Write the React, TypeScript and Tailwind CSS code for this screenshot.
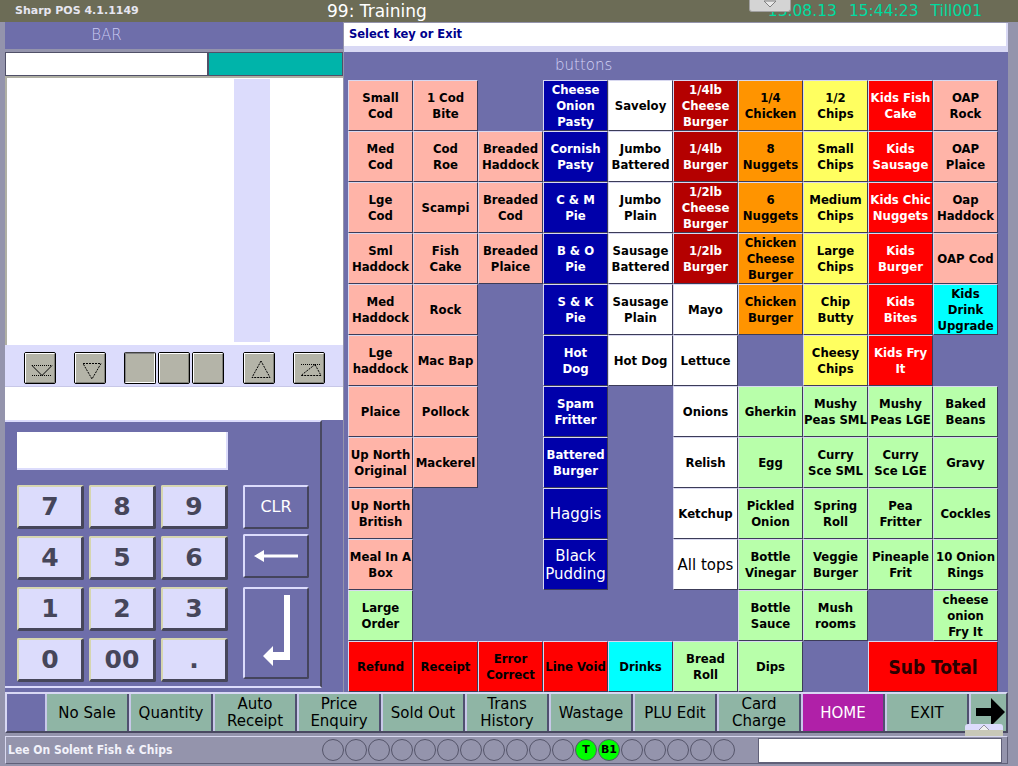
import React from 'react'

type Kind = 'P' | 'B' | 'W' | 'D' | 'O' | 'Y' | 'R' | 'X' | 'C' | 'G' | 'S'
type Cell = [string, Kind, ('big' | 'wide')?] | null

const KIND: Record<Kind, string> = {
  P: 'bg-[#ffb4a8] text-black',
  B: 'bg-[#0000aa] text-white',
  W: 'bg-white text-black',
  D: 'bg-[#b40000] text-white',
  O: 'bg-[#ff9400] text-black',
  Y: 'bg-[#ffff60] text-black',
  R: 'bg-[#ff0000] text-white',
  X: 'bg-[#ff0000] text-black',
  C: 'bg-[#00ffff] text-black',
  G: 'bg-[#b8ffaa] text-black',
  S: 'bg-[#ff0000] text-[#2a0000] col-span-2',
}

const GRID: Cell[][] = [
  [['Small\nCod', 'P'], ['1 Cod\nBite', 'P'], null, ['Cheese\nOnion\nPasty', 'B'], ['Saveloy', 'W'], ['1/4lb\nCheese\nBurger', 'D'], ['1/4\nChicken', 'O'], ['1/2\nChips', 'Y'], ['Kids Fish\nCake', 'R'], ['OAP\nRock', 'P']],
  [['Med\nCod', 'P'], ['Cod\nRoe', 'P'], ['Breaded\nHaddock', 'P'], ['Cornish\nPasty', 'B'], ['Jumbo\nBattered', 'W'], ['1/4lb\nBurger', 'D'], ['8\nNuggets', 'O'], ['Small\nChips', 'Y'], ['Kids\nSausage', 'R'], ['OAP\nPlaice', 'P']],
  [['Lge\nCod', 'P'], ['Scampi', 'P'], ['Breaded\nCod', 'P'], ['C & M\nPie', 'B'], ['Jumbo\nPlain', 'W'], ['1/2lb\nCheese\nBurger', 'D'], ['6\nNuggets', 'O'], ['Medium\nChips', 'Y'], ['Kids Chic\nNuggets', 'R'], ['Oap\nHaddock', 'P']],
  [['Sml\nHaddock', 'P'], ['Fish\nCake', 'P'], ['Breaded\nPlaice', 'P'], ['B & O\nPie', 'B'], ['Sausage\nBattered', 'W'], ['1/2lb\nBurger', 'D'], ['Chicken\nCheese\nBurger', 'O'], ['Large\nChips', 'Y'], ['Kids\nBurger', 'R'], ['OAP Cod', 'P']],
  [['Med\nHaddock', 'P'], ['Rock', 'P'], null, ['S & K\nPie', 'B'], ['Sausage\nPlain', 'W'], ['Mayo', 'W'], ['Chicken\nBurger', 'O'], ['Chip\nButty', 'Y'], ['Kids\nBites', 'R'], ['Kids\nDrink\nUpgrade', 'C']],
  [['Lge\nhaddock', 'P'], ['Mac Bap', 'P'], null, ['Hot\nDog', 'B'], ['Hot Dog', 'W'], ['Lettuce', 'W'], null, ['Cheesy\nChips', 'Y'], ['Kids Fry\nIt', 'R'], null],
  [['Plaice', 'P'], ['Pollock', 'P'], null, ['Spam\nFritter', 'B'], null, ['Onions', 'W'], ['Gherkin', 'G'], ['Mushy\nPeas SML', 'G'], ['Mushy\nPeas LGE', 'G'], ['Baked\nBeans', 'G']],
  [['Up North\nOriginal', 'P'], ['Mackerel', 'P'], null, ['Battered\nBurger', 'B'], null, ['Relish', 'W'], ['Egg', 'G'], ['Curry\nSce SML', 'G'], ['Curry\nSce LGE', 'G'], ['Gravy', 'G']],
  [['Up North\nBritish', 'P'], null, null, ['Haggis', 'B', 'big'], null, ['Ketchup', 'W'], ['Pickled\nOnion', 'G'], ['Spring\nRoll', 'G'], ['Pea\nFritter', 'G'], ['Cockles', 'G']],
  [['Meal In A\nBox', 'P'], null, null, ['Black\nPudding', 'B', 'big'], null, ['All tops', 'W', 'big'], ['Bottle\nVinegar', 'G'], ['Veggie\nBurger', 'G'], ['Pineaple\nFrit', 'G'], ['10 Onion\nRings', 'G']],
  [['Large\nOrder', 'G'], null, null, null, null, null, ['Bottle\nSauce', 'G'], ['Mush\nrooms', 'G'], null, ['cheese\nonion\nFry It', 'G']],
  [['Refund', 'X'], ['Receipt', 'X'], ['Error\nCorrect', 'X'], ['Line Void', 'X'], ['Drinks', 'C'], ['Bread\nRoll', 'G'], ['Dips', 'G'], null, ['Sub Total', 'S', 'wide']],
]

const FUNCS = ['No Sale', 'Quantity', 'Auto\nReceipt', 'Price\nEnquiry', 'Sold Out', 'Trans\nHistory', 'Wastage', 'PLU Edit', 'Card\nCharge', 'HOME', 'EXIT']

function PluKey({ cell }: { cell: Cell }) {
  if (!cell) return <div />
  const [label, kind, mod] = cell
  const type =
    mod === 'big'
      ? "font-['DejaVu_Sans',sans-serif] text-[15px] font-normal leading-[18px]"
      : mod === 'wide'
        ? 'text-[19px] font-bold leading-[22px]'
        : 'text-[13px] font-bold leading-[16px]'
  return (
    <div
      className={`flex items-center justify-center overflow-hidden whitespace-pre text-center border border-t-[#d8d8f0] border-l-[#d8d8f0] border-b-[#3c3c58] border-r-[#3c3c58] ${KIND[kind]} ${type}`}
    >
      {label}
    </div>
  )
}

function NumKey({ label }: { label: string }) {
  return (
    <div className="flex h-[44px] items-center justify-center rounded-[2px] border-t-2 border-l-2 border-t-[#d6d6b0] border-l-[#d6d6b0] border-b-[3px] border-r-[3px] border-b-[#46465a] border-r-[#46465a] bg-[#dcdcfc] text-[25px] font-bold text-[#46465a]">
      {label}
    </div>
  )
}

function ToolBtn({ children, pressed }: { children?: React.ReactNode; pressed?: boolean }) {
  return (
    <div
      className={`h-[32px] w-[32px] rounded-[2px] border border-black bg-[#b4b4a8] ${pressed ? 'border-t-[#404040]' : ''}`}
    >
      <div
        className={`h-full w-full border ${pressed ? 'border-t-[#808080] border-l-[#808080] border-b-white border-r-white' : 'border-t-white border-l-white border-b-[#808078] border-r-[#808078]'}`}
      >
        {children && (
          <svg width="30" height="30" viewBox="0 0 30 30">
            {children}
          </svg>
        )}
      </div>
    </div>
  )
}

export default function App() {
  return (
    <div className="relative h-[766px] w-[1018px] overflow-hidden bg-[#9494ac] font-['DejaVu_Sans_Condensed','DejaVu_Sans',sans-serif]">
      {/* title bar */}
      <div className="flex h-[22px] items-center bg-[#6c6c56] font-['DejaVu_Sans',sans-serif]">
        <span className="ml-[15px] w-[312px] text-[11px] font-bold text-[#e6e6f0]">Sharp POS 4.1.1149</span>
        <span className="text-[17px] leading-[22px] text-white">99: Training</span>
        <span className="ml-auto mr-[36px] flex gap-[12px] text-[15.5px] leading-[22px] text-[#00dca0]">
          <span>13.08.13</span>
          <span>15:44:23</span>
          <span>Till001</span>
        </span>
        <div className="absolute left-[749px] top-0 flex h-[12px] w-[42px] justify-center rounded-b-[3px] border border-t-0 border-[#a0a0a0] bg-[#d4d4d4]">
          <svg width="16" height="8" viewBox="0 0 16 8">
            <path d="M2 1 H14 L8 7 Z" fill="#e8e8e8" stroke="#808080" strokeWidth="1" />
          </svg>
        </div>
      </div>

      <div className="flex h-[670px]">
        {/* left column */}
        <div className="ml-[5px] flex w-[338px] flex-col">
          <div className="h-[27px] bg-[#6e6eaa]">
            <div className="w-[203px] text-center text-[15px] font-light leading-[27px] text-[#cacaf2] font-['DejaVu_Sans',sans-serif]">BAR</div>
          </div>
          <div className="mt-[3px] flex h-[24px]">
            <div className="w-[203px] border border-[#505068] bg-white" />
            <div className="flex-1 border border-[#505068] bg-[#00b4aa]" />
          </div>
          <div className="flex h-[269px] border-t-2 border-l-2 border-[#b0b0a4] bg-white pt-[1px] pb-[3px]">
            <div className="ml-[227px] w-[36px] bg-[#dcdcfc]" />
          </div>
          <div className="flex h-[41px] items-start bg-[#dcdcfc] pt-[7px]">
            <div className="ml-[19px]">
              <ToolBtn>
                <path d="M6 11.5 H26" stroke="black" strokeDasharray="1 1" />
                <path d="M6 11.5 L16 21.5 L26 11.5" stroke="black" fill="none" />
                <path d="M6 21.5 H26" stroke="black" strokeDasharray="1 1" />
              </ToolBtn>
            </div>
            <div className="ml-[18px]">
              <ToolBtn>
                <path d="M7 9.5 H25 L16 25 Z" stroke="black" fill="none" strokeDasharray="2 1" />
              </ToolBtn>
            </div>
            <div className="ml-[18px]">
              <ToolBtn pressed />
            </div>
            <div className="ml-[2px]">
              <ToolBtn />
            </div>
            <div className="ml-[2px]">
              <ToolBtn />
            </div>
            <div className="ml-[19px]">
              <ToolBtn>
                <path d="M16 7 L7 23.5 H25 Z" stroke="black" fill="none" strokeDasharray="2 1" />
              </ToolBtn>
            </div>
            <div className="ml-[18px]">
              <ToolBtn>
                <path d="M6 10.5 H26" stroke="black" strokeDasharray="1 1" />
                <path d="M20 10.5 L6 21.5 H26 Z" stroke="black" fill="none" strokeDasharray="2 1" />
              </ToolBtn>
            </div>
          </div>
          <div className="h-[34px] border-t border-[#c8c8e8] bg-white" />
          {/* keypad */}
          <div className="flex h-[272px] bg-[#6e6eaa]">
            <div className="h-[268px] w-[317px] border-t-2 border-r-2 border-b-2 border-t-[#dcdcfc] border-r-[#484860] border-b-[#dcdcfc] pl-[12px]">
              <div className="mt-[10px] h-[38px] w-[211px] border-r-2 border-b-2 border-[#dcdcfc] bg-white" />
              <div className="mt-[15px] flex">
                <div className="grid w-[211px] grid-cols-3 gap-x-[5px] gap-y-[7px] font-['DejaVu_Sans',sans-serif]">
                  {['7', '8', '9', '4', '5', '6', '1', '2', '3', '0', '00', '.'].map((k) => (
                    <NumKey key={k} label={k} />
                  ))}
                </div>
                <div className="ml-[15px] flex w-[66px] flex-col">
                  <div className="flex h-[44px] items-center justify-center rounded-[2px] border-2 border-t-[#dcdcfc] border-l-[#dcdcfc] border-b-[#44445c] border-r-[#44445c] text-[16px] text-white font-['DejaVu_Sans',sans-serif]">
                    CLR
                  </div>
                  <div className="mt-[5px] flex h-[44px] items-center justify-center rounded-[2px] border-2 border-t-[#dcdcfc] border-l-[#dcdcfc] border-b-[#44445c] border-r-[#44445c]">
                    <svg width="46" height="14" viewBox="0 0 46 14">
                      <path d="M1 7 L11 1 V5.5 H45 V8.5 H11 V13 Z" fill="white" />
                    </svg>
                  </div>
                  <div className="relative mt-[9px] h-[92px] rounded-[2px] border-2 border-t-[#dcdcfc] border-l-[#dcdcfc] border-b-[#44445c] border-r-[#44445c]">
                    <svg className="absolute left-0 top-0" width="62" height="88" viewBox="0 0 62 88">
                      <path d="M39 6 H45 V71 H28 V77 L18 67 L28 57 V63 H39 Z" fill="white" />
                    </svg>
                  </div>
                </div>
              </div>
            </div>
          </div>
        </div>

        {/* right column */}
        <div className="ml-[1px] flex w-[664px] flex-col">
          <div className="mt-[1px] flex h-[24px] items-center border-r-2 border-b border-[#d8d8f4] bg-white pl-[5px]">
            <span className="text-[11.5px] font-bold text-[#00008c] font-['DejaVu_Sans',sans-serif]">Select key or Exit</span>
          </div>
          <div className="h-[5px] bg-[#d8d8f4]" />
          <div className="h-[640px] bg-[#6e6eaa]">
            <div className="h-[28px] pl-[211px] pt-[2px] text-[15px] font-light leading-[22px] text-[#d4d4f6] font-['DejaVu_Sans',sans-serif]">buttons</div>
            <div className="ml-[4px] grid grid-cols-[repeat(10,65px)] grid-rows-[repeat(12,51px)]">
              {GRID.flat().map((c, i) => (
                <PluKey key={i} cell={c} />
              ))}
            </div>
          </div>
        </div>
      </div>

      {/* function bar */}
      <div className="ml-[5px] flex h-[41px] w-[1003px] border-t-2 border-l-2 border-b-2 border-r-2 border-t-[#d8d8f4] border-l-[#d8d8f4] border-b-[#484860] border-r-[#484860] bg-[#6e6eaa] font-['DejaVu_Sans',sans-serif]">
        <div className="w-[38px]" />
        {FUNCS.map((f) => {
          const two = f.includes('\n')
          const home = f === 'HOME'
          return (
            <div
              key={f}
              className={`flex w-[84px] justify-center overflow-hidden whitespace-pre-line border-l-2 border-r-2 border-l-[#c8c8e8] border-r-[#505070] text-center text-[15px] ${two ? 'items-start pt-[2px] leading-[17px]' : 'items-center leading-[18px]'} ${home ? 'bg-[#b020a8] text-white' : 'bg-[#8fb5a5] text-black'}`}
            >
              {f}
            </div>
          )
        })}
        <div className="w-[37px] border-l-2 border-[#c8c8e8] bg-[#8fb5a5]">
          <svg width="35" height="36" viewBox="0 0 35 36">
            <path d="M5 14 H20 V4 L34 18 L20 32 V22 H5 Z" fill="black" />
          </svg>
        </div>
      </div>

      {/* status bar */}
      <div className="ml-[5px] mt-[3px] flex h-[28px] w-[1003px] items-center border border-t-[#d8d8f0] border-l-[#d8d8f0] border-b-[#606078] border-r-[#606078]">
        <span className="w-[316px] pl-[2px] text-[12px] font-bold text-[#f2f2fa]">Lee On Solent Fish &amp; Chips</span>
        <div className="flex gap-[1px] font-['DejaVu_Sans',sans-serif]">
          {Array.from({ length: 18 }).map((_, i) => {
            const lbl = i === 11 ? 'T' : i === 12 ? 'B1' : ''
            return (
              <div
                key={i}
                className={`flex h-[22px] w-[22px] items-center justify-center rounded-full border border-[#55556a] text-[11px] font-bold text-black ${lbl ? 'bg-[#00ff00]' : ''}`}
              >
                {lbl}
              </div>
            )
          })}
        </div>
        <div className="ml-auto mr-[5px] h-[25px] w-[244px] border border-[#606078] bg-white" />
      </div>

      <div className="absolute left-[965px] top-[724px] flex h-[12px] w-[38px] flex-col">
        <div className="flex h-[6px] justify-center rounded-t-[3px] bg-[#dcdcfc]">
          <svg width="12" height="6" viewBox="0 0 12 6">
            <path d="M1 6 L6 1 L11 6" fill="#f0f0f0" stroke="#9090a0" />
          </svg>
        </div>
        <div className="h-[6px] bg-[#c8c8b8]" />
      </div>
    </div>
  )
}
